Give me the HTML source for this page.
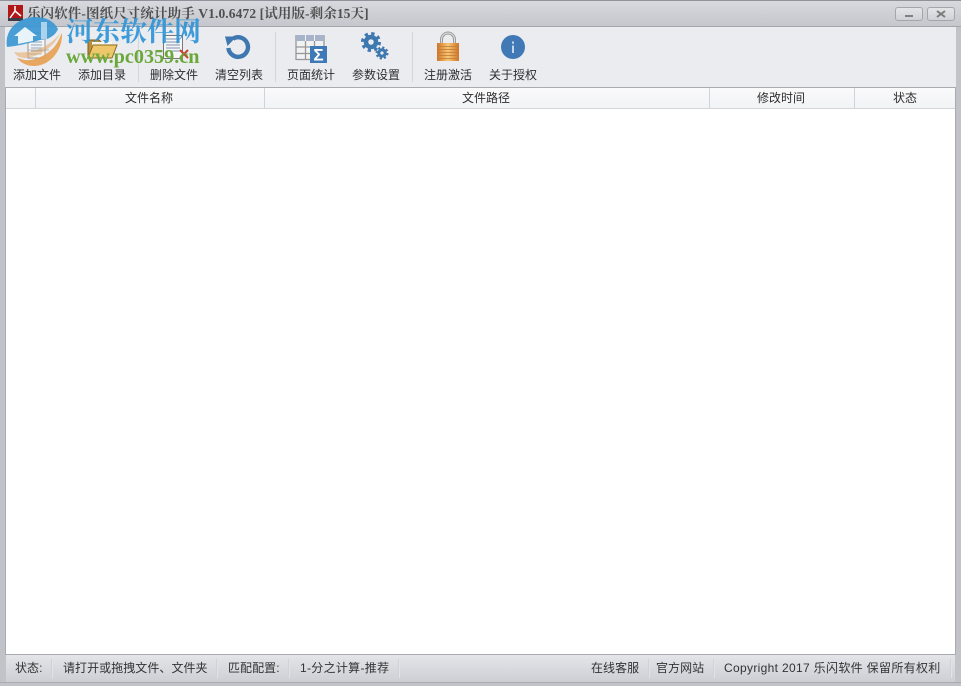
<!DOCTYPE html>
<html><head><meta charset="utf-8">
<style>
html,body{margin:0;padding:0;width:961px;height:686px;overflow:hidden;background:#c2c3c9}
body{position:relative;font-family:"Liberation Sans","Noto Sans CJK SC",sans-serif;font-size:12px;color:#2b2b2b}
.a{position:absolute}
.tb{position:absolute;top:68px;width:70px;text-align:center;font-size:12px;line-height:15px;white-space:nowrap;color:#2e2e2e}
.th{position:absolute;top:88px;height:20px;line-height:20px;text-align:center;font-size:12px;color:#2e2e2e;white-space:nowrap}
.vl{position:absolute;top:88px;height:20px;width:1px;background:#d0d3d9}
.sep{position:absolute;top:32px;height:50px;width:1px;background:#d4d6dc}
.st{position:absolute;top:661px;line-height:15px;font-size:12px;color:#333;white-space:nowrap;letter-spacing:.05px}
.ss{position:absolute;top:659px;height:19px;width:1px;background:#cfd1d6;box-shadow:1px 0 0 #e2e3e7}
</style></head><body>
<div class="a" style="left:0;top:0;width:961px;height:27px;background:linear-gradient(#d8d9df,#c5c6cc);border-top:1px solid #8f929a;box-sizing:border-box"></div>
<div class="a" style="left:0;top:26px;width:961px;height:1px;background:#a3a5ab"></div>
<div class="a" style="left:0;top:27px;width:5px;height:659px;background:#c2c3c9"></div>
<div class="a" style="left:956px;top:27px;width:5px;height:659px;background:#c2c3c9"></div>
<div class="a" style="left:5px;top:27px;width:951px;height:61px;background:#ebecf0"></div>

<svg class="a" style="left:8px;top:5px" width="15" height="16" viewBox="0 0 15 16"><rect width="15" height="16" fill="#b01818"/><rect y="13" width="15" height="3" fill="#3c3c48"/><path d="M7 1 L7 6 L2 13 M7 6 L13 11" stroke="#fff" stroke-width="1.5" fill="none"/></svg>
<div class="a" style="left:27px;top:5px;font-family:'Liberation Serif','Noto Serif CJK SC',serif;font-size:13.5px;line-height:17px;font-weight:bold;color:#4f4f4f;white-space:nowrap;letter-spacing:.1px">乐闪软件-图纸尺寸统计助手 V1.0.6472 [试用版-剩余15天]</div>

<div class="a" style="left:895px;top:7px;width:28px;height:14px;box-sizing:border-box;border:1px solid #a4a6ac;border-radius:3px;background:linear-gradient(#e4e5e9,#cfd1d6)"></div>
<div class="a" style="left:905px;top:15px;width:8px;height:2px;background:#808080"></div>
<div class="a" style="left:927px;top:7px;width:28px;height:14px;box-sizing:border-box;border:1px solid #a4a6ac;border-radius:3px;background:linear-gradient(#e4e5e9,#cfd1d6)"></div>
<svg class="a" style="left:936px;top:10px" width="10" height="8"><path d="M1 1L9 7M9 1L1 7" stroke="#7c7c7c" stroke-width="2"/></svg>

<!-- add file icon -->
<svg class="a" style="left:24px;top:31px" width="28" height="30"><rect x="4" y="2" width="17" height="25" fill="#f4f4f4" stroke="#999"/><path d="M7 8h11M7 11h11M7 14h11M7 17h11M7 20h11" stroke="#8ea3bd"/></svg>
<!-- folder -->
<svg class="a" style="left:86px;top:34px" width="32" height="26"><path d="M2 6h11l3 3h9v15H2z" fill="#b98f3c" stroke="#7a5c1c"/><path d="M6 8h20v6H6z" fill="#fbf8ee"/><path d="M2 24L7 11h24l-5 13z" fill="#edc76a" stroke="#8a6a20"/></svg>
<!-- delete -->
<svg class="a" style="left:161px;top:33px" width="30" height="28"><rect x="2.5" y="2.5" width="19" height="23" fill="#f6f6f6" stroke="#777"/><path d="M5 6h14M5 9h14M5 12h14M5 15h14M5 18h14" stroke="#7f93ad"/><path d="M19 17l8 8M27 17l-8 8" stroke="#c8402c" stroke-width="2"/></svg>
<!-- refresh -->
<svg class="a" style="left:224px;top:33px" width="28" height="28" viewBox="0 0 28 28"><path d="M9 5.7A9.8 9.8 0 1 1 4.4 15" fill="none" stroke="#3f78b0" stroke-width="4.4"/><path d="M1 3.5L12.5 3.5L3.500 13z" fill="#3f78b0"/></svg>
<!-- table sigma -->
<svg class="a" style="left:295px;top:34px" width="33" height="30"><rect x="1" y="1" width="28" height="25" fill="#f1f2f4"/><path d="M10.500 1v25M19.500 1v25M1 13h28M1 19.500h28M1 25.500h28M1 1v25M29 1v25" stroke="#979797" stroke-width="1.300"/><rect x="1" y="1" width="28" height="6" fill="#a6b3c8"/><path d="M10.500 1v6M19.500 1v6" stroke="#f1f2f4"/><rect x="15" y="12" width="17" height="17" fill="#3f7ab8"/><text x="23.500" y="26.500" font-size="17" font-weight="bold" fill="#fff" text-anchor="middle" font-family="'Liberation Sans',sans-serif">Σ</text></svg>
<!-- gears -->
<svg class="a" style="left:360px;top:31px" width="32" height="30"><circle cx="11" cy="11" r="5" fill="none" stroke="#3e78b0" stroke-width="4.500"/><circle cx="11" cy="11" r="8.500" fill="none" stroke="#3e78b0" stroke-width="3" stroke-dasharray="3.300 3.370"/><circle cx="22" cy="22" r="3.200" fill="none" stroke="#3e78b0" stroke-width="3.200"/><circle cx="22" cy="22" r="5.400" fill="none" stroke="#3e78b0" stroke-width="2.200" stroke-dasharray="2.200 2.040"/></svg>
<!-- lock -->
<svg class="a" style="left:434px;top:30px" width="28" height="34"><path d="M7.500 14V9.500a6.500 6.500 0 0 1 13 0V14" fill="none" stroke="#9c9c9c" stroke-width="3"/><path d="M7.500 14V9.500a6.500 6.500 0 0 1 13 0V14" fill="none" stroke="#dedede" stroke-width="1"/><defs><linearGradient id="g" x1="0" x2="1" y1="0" y2="0"><stop offset="0" stop-color="#cf7426"/><stop offset=".5" stop-color="#f6c876"/><stop offset="1" stop-color="#cf7426"/></linearGradient></defs><rect x="3" y="13" width="22" height="18" fill="url(#g)"/><path d="M3 16.500h22M3 19.500h22M3 22.500h22M3 25.500h22M3 28.500h22" stroke="#c47a34" stroke-opacity=".8"/></svg>
<!-- info -->
<svg class="a" style="left:500px;top:34px" width="26" height="26"><circle cx="13" cy="13" r="12" fill="#4079b6"/><rect x="12" y="11.500" width="2" height="7.500" fill="#c4d6ea"/><rect x="12" y="7.500" width="2" height="2.200" fill="#c4d6ea"/></svg>

<div class="tb" style="left:2px">添加文件</div>
<div class="tb" style="left:67px">添加目录</div>
<div class="tb" style="left:139px">删除文件</div>
<div class="tb" style="left:204px">清空列表</div>
<div class="tb" style="left:276px">页面统计</div>
<div class="tb" style="left:341px">参数设置</div>
<div class="tb" style="left:413px">注册激活</div>
<div class="tb" style="left:478px">关于授权</div>
<div class="sep" style="left:138px"></div>
<div class="sep" style="left:275px"></div>
<div class="sep" style="left:412px"></div>

<!-- table -->
<div class="a" style="left:5px;top:87px;width:951px;height:1px;background:#a9abb1"></div>
<div class="a" style="left:6px;top:88px;width:949px;height:20px;background:linear-gradient(#fafafb,#f2f3f5)"></div>
<div class="a" style="left:6px;top:108px;width:949px;height:1px;background:#d3d5da"></div>
<div class="a" style="left:6px;top:109px;width:949px;height:545px;background:#fff"></div>
<div class="a" style="left:5px;top:88px;width:1px;height:566px;background:#a9abb1"></div>
<div class="a" style="left:955px;top:88px;width:1px;height:566px;background:#a9abb1"></div>
<div class="vl" style="left:35px"></div><div class="vl" style="left:264px"></div><div class="vl" style="left:709px"></div><div class="vl" style="left:854px"></div>
<div class="th" style="left:35px;width:228px">文件名称</div>
<div class="th" style="left:264px;width:444px">文件路径</div>
<div class="th" style="left:709px;width:144px">修改时间</div>
<div class="th" style="left:855px;width:100px">状态</div>

<!-- status -->
<div class="a" style="left:5px;top:654px;width:951px;height:1px;background:#a9abb1"></div>
<div class="a" style="left:6px;top:655px;width:949px;height:27px;background:linear-gradient(#e4e5e9,#cdcfd5)"></div>
<div class="a" style="left:0;top:682px;width:961px;height:1px;background:#a9abb1"></div>
<div class="a" style="left:0;top:683px;width:961px;height:3px;background:#c2c3c9"></div>
<div class="st" style="left:15px">状态:</div>
<div class="st" style="left:63px">请打开或拖拽文件、文件夹</div>
<div class="st" style="left:228px">匹配配置:</div>
<div class="st" style="left:300px;letter-spacing:.3px">1-分之计算-推荐</div>
<div class="st" style="left:591px">在线客服</div>
<div class="st" style="left:656px">官方网站</div>
<div class="st" style="left:724px;letter-spacing:.33px">Copyright 2017 乐闪软件 保留所有权利</div>
<div class="ss" style="left:51px"></div><div class="ss" style="left:216px"></div><div class="ss" style="left:288px"></div><div class="ss" style="left:398px"></div><div class="ss" style="left:648px"></div><div class="ss" style="left:713px"></div><div class="ss" style="left:950px"></div>

<!-- watermark -->
<svg class="a" style="left:0;top:10px" width="66" height="60" viewBox="0 10 66 60">
<path d="M7 47C4 30 18 17 36 17C46 17 54 21 58 29C56 34 52 37 47 39L40 40C30 43 18 46 7 47Z" fill="#3a97d3" fill-opacity=".92"/>
<path d="M25 27L37 36L33 36L33 41L18 44L18 36L14 36Z" fill="#fff" fill-opacity=".88"/>
<path d="M41 22h6v17h-6z" fill="#fff" fill-opacity=".55"/>
<path d="M21 59C30 63 47 56 55 46C58 42 60 37 62 33C63 50 50 66 34 66C27 66 21 63 17 58C18 58 20 59 21 59Z" fill="#e8a050" fill-opacity=".9"/>
<path d="M14 52C26 54 48 50 60 33C55 46 40 57 25 58C20 58 16 56 14 52Z" fill="#e9a860" fill-opacity=".55"/>
<path d="M28 50h21M28 54h14" stroke="#9a9a9a" stroke-opacity=".6"/>
</svg>
<div class="a" style="left:66px;top:14px;font-family:'Noto Serif CJK SC',serif;font-size:27px;line-height:32px;font-weight:bold;color:#2f95d8;opacity:.92;white-space:nowrap">河东软件网</div>
<div class="a" style="left:66px;top:46px;font-family:'Liberation Serif',serif;font-size:20.200px;line-height:22px;font-weight:bold;color:#6ba83a;white-space:nowrap">www.pc0359.cn</div>
</body></html>
